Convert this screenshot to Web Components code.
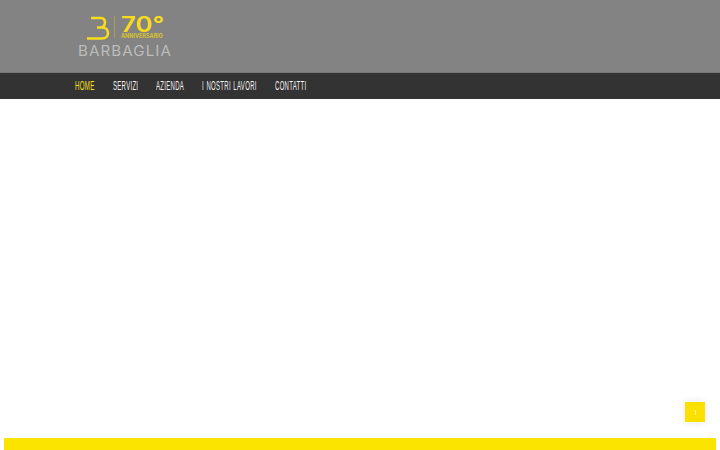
<!DOCTYPE html>
<html lang="it">
<head>
<meta charset="utf-8">
<title>Barbaglia</title>
<style>
  html, body { margin: 0; height: 100%; background: #fff; overflow: hidden; }
  body { display: flex; flex-direction: column; height: 450px; font-family: "Liberation Sans", sans-serif; }
</style>
</head>
<body>
<site-header></site-header>
<site-nav>
  <nav-link active w="19.5">HOME</nav-link>
  <nav-link w="25.5">SERVIZI</nav-link>
  <nav-link w="28">AZIENDA</nav-link>
  <nav-link w="54.5">I NOSTRI LAVORI</nav-link>
  <nav-link w="31.5">CONTATTI</nav-link>
</site-nav>
<page-body></page-body>
<yellow-band></yellow-band>
<to-top></to-top>
<script>
// text squeezed or stretched to a given width, the condensed face is not installed
class FitText extends HTMLElement {
  constructor() {
    super();
    this.attachShadow({ mode: 'open' });
    this.shadowRoot.innerHTML = `
      <style>
        :host { display: block; white-space: nowrap; }
        span { display: inline-block; transform-origin: left center; }
      </style>
      <span><slot></slot></span>`;
  }

  connectedCallback() {
    const w = parseFloat(this.getAttribute('w'));
    const span = this.shadowRoot.querySelector('span');
    this.style.width = w + 'px';
    span.style.transform = `scaleX(${w / span.offsetWidth})`;
  }
}

class SiteHeader extends HTMLElement {
  constructor() {
    super();
    this.attachShadow({ mode: 'open' });
    this.shadowRoot.innerHTML = `
      <style>
        :host { display: block; height: 73px; background: #838383; border-bottom: 1px solid #777; padding: 16px 0 0 77px; box-sizing: border-box; }
        .logo { width: 96px; }
        .top { display: flex; height: 24px; margin-left: 7px; }
        svg { display: block; flex: none; }
        .rule { width: 1px; height: 22px; background: #a89f4e; margin-left: 4px; }
        .anni { margin-left: 6px; }
        .seventy { font: 600 21px/17px "Inter", sans-serif; color: #f7dc1c; height: 17px; }
        .sub { font: 700 6.5px/6px "Inter", sans-serif; color: #d9c42a; }
        .name { font: 400 14px/13px "Inter", sans-serif; letter-spacing: 1px; color: #bcbcbc; margin: 4px 0 0 1px; }
      </style>
      <div class="logo">
        <div class="top">
          <svg width="26" height="24" viewBox="84 16 26 24" fill="none" stroke="#f7dc1c" stroke-width="2.6">
            <path d="M91 18H100.500C103.500 18 105 20 105 22.500C105 25.500 103 27.500 100 27.500H97M100 27.500H102C106 27.500 108 30 108 33C108 36 106 38.500 102 38.500H87"/>
          </svg>
          <div class="rule"></div>
          <div class="anni">
            <fit-text class="seventy" w="43">70°</fit-text>
            <fit-text class="sub" w="42">ANNIVERSARIO</fit-text>
          </div>
        </div>
        <fit-text class="name" w="94">BARBAGLIA</fit-text>
      </div>`;
  }
}

class SiteNav extends HTMLElement {
  constructor() {
    super();
    this.attachShadow({ mode: 'open' });
    this.shadowRoot.innerHTML = `
      <style>
        :host { display: flex; align-items: center; gap: 18px; height: 26px; background: #333; padding-left: 75px; box-sizing: border-box; }
      </style>
      <slot></slot>`;
  }
}

class NavLink extends HTMLElement {
  constructor() {
    super();
    this.attachShadow({ mode: 'open' });
    this.shadowRoot.innerHTML = `
      <style>
        :host { display: block; font-size: 12px; line-height: 26px; letter-spacing: .6px; word-spacing: 1px; color: #f2f2f2; }
        :host([active]) { color: #f7e11a; }
      </style>
      <fit-text w="${this.getAttribute('w')}"><slot></slot></fit-text>`;
  }
}

class PageBody extends HTMLElement {
  constructor() {
    super();
    this.attachShadow({ mode: 'open' });
    this.shadowRoot.innerHTML = `<style>:host { display: block; flex: 1; background: #fff; }</style>`;
  }
}

class YellowBand extends HTMLElement {
  constructor() {
    super();
    this.attachShadow({ mode: 'open' });
    this.shadowRoot.innerHTML = `<style>:host { display: block; height: 12px; margin: 0 4px; background: #fbe400; }</style>`;
  }
}

class ToTop extends HTMLElement {
  constructor() {
    super();
    this.attachShadow({ mode: 'open' });
    this.shadowRoot.innerHTML = `
      <style>
        :host { position: fixed; left: 685px; top: 402px; width: 20px; height: 20px; background: #fbe000; box-shadow: 0 0 8px rgba(0,0,0,.1); display: flex; align-items: center; justify-content: center; }
        i { display: block; width: 1px; height: 5px; background: #fff6a8; }
      </style>
      <i></i>`;
  }
}

customElements.define('fit-text', FitText);
customElements.define('site-header', SiteHeader);
customElements.define('site-nav', SiteNav);
customElements.define('nav-link', NavLink);
customElements.define('page-body', PageBody);
customElements.define('yellow-band', YellowBand);
customElements.define('to-top', ToTop);
</script>
</body>
</html>
